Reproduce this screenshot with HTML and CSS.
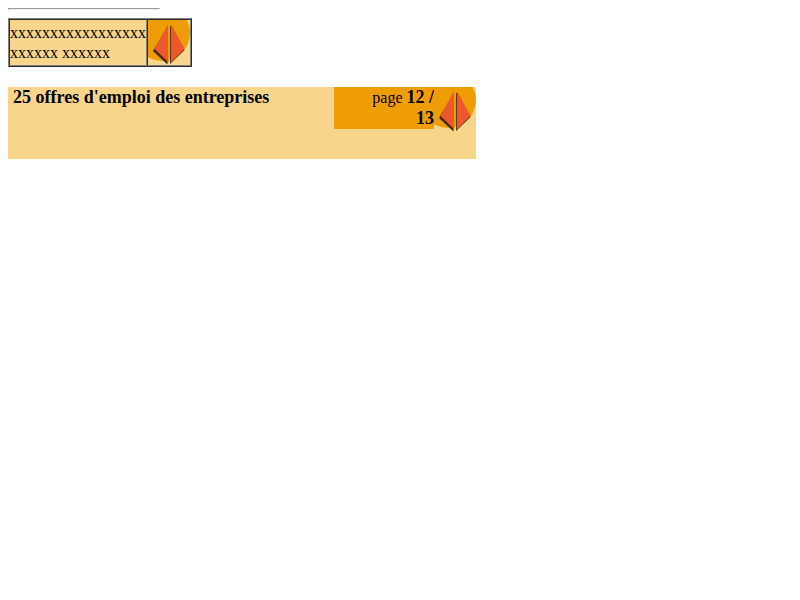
FILE: index.html
```
<!DOCTYPE html>
<html lang="fr">
<head>
<meta charset="utf-8">
<title>Offres d'emploi</title>
<link rel="stylesheet" href="styles.css">
</head>
<body>
<svg class="defs" aria-hidden="true">
  <defs>
    <filter id="soft" x="-20%" y="-20%" width="140%" height="140%"><feGaussianBlur stdDeviation="0.7"/></filter>
    <symbol id="logo" viewBox="0 0 42 45">
      <circle cx="14" cy="13" r="28" fill="#ee9d05"/>
      <g fill="#3f2c08" filter="url(#soft)">
        <path d="M19.500 7L5 31L19.500 44.500Z"/>
        <path d="M22 6V44L36.500 30Z"/>
      </g>
      <path d="M20 4V42L6.500 29Z" fill="#ea582b"/>
      <path d="M23 4V42.500L36.500 29Z" fill="#ea582b"/>
      <path d="M20 5h1v37h-1z" fill="#ee9d05"/>
      <path d="M22 6h1v37h-1z" fill="#5a3808"/>
    </symbol>
  </defs>
</svg>
<hr class="rule">
<table class="sample">
  <tr>
    <td>xxxxxxxxxxxxxxxxx<br>xxxxxx xxxxxx</td>
    <td><svg class="logo" aria-hidden="true"><use href="#logo"/></svg></td>
  </tr>
</table>
<div class="banner">
  <strong class="title">25 offres d'emploi des entreprises</strong>
  <div class="pager">page <strong>12 /<br>13</strong></div>
  <svg class="logo" aria-hidden="true"><use href="#logo"/></svg>
</div>
</body>
</html>
```
FILE: styles.css
```
body {
  margin: 8px;
  background: #fff;
  color: #000;
  font: 16px/20px "Liberation Serif", serif;
}

.defs {
  position: absolute;
  width: 0;
  height: 0;
}

.rule {
  width: 150px;
  margin: 0 0 8px;
  border: 1px solid;
  border-color: #9a9a9a #eee #eee #9a9a9a;
}

.sample {
  margin-bottom: 20px;
  border: 1px outset #808080;
  border-spacing: 0;
  background: #f7d58b;
}

.sample td {
  padding: 0;
  border: 1px inset #808080;
  vertical-align: middle;
}

.logo {
  display: block;
  flex: none;
  width: 42px;
  height: 45px;
}

.banner {
  display: flex;
  align-items: flex-start;
  box-sizing: border-box;
  max-width: 468px;
  min-height: 72px;
  padding-left: 5px;
  background: #f7d58b;
  line-height: 21px;
}

.banner strong {
  font-size: 18px;
}

.title {
  flex: 1;
}

.pager {
  width: 100px;
  background: #ee9d05;
  text-align: right;
}
```
